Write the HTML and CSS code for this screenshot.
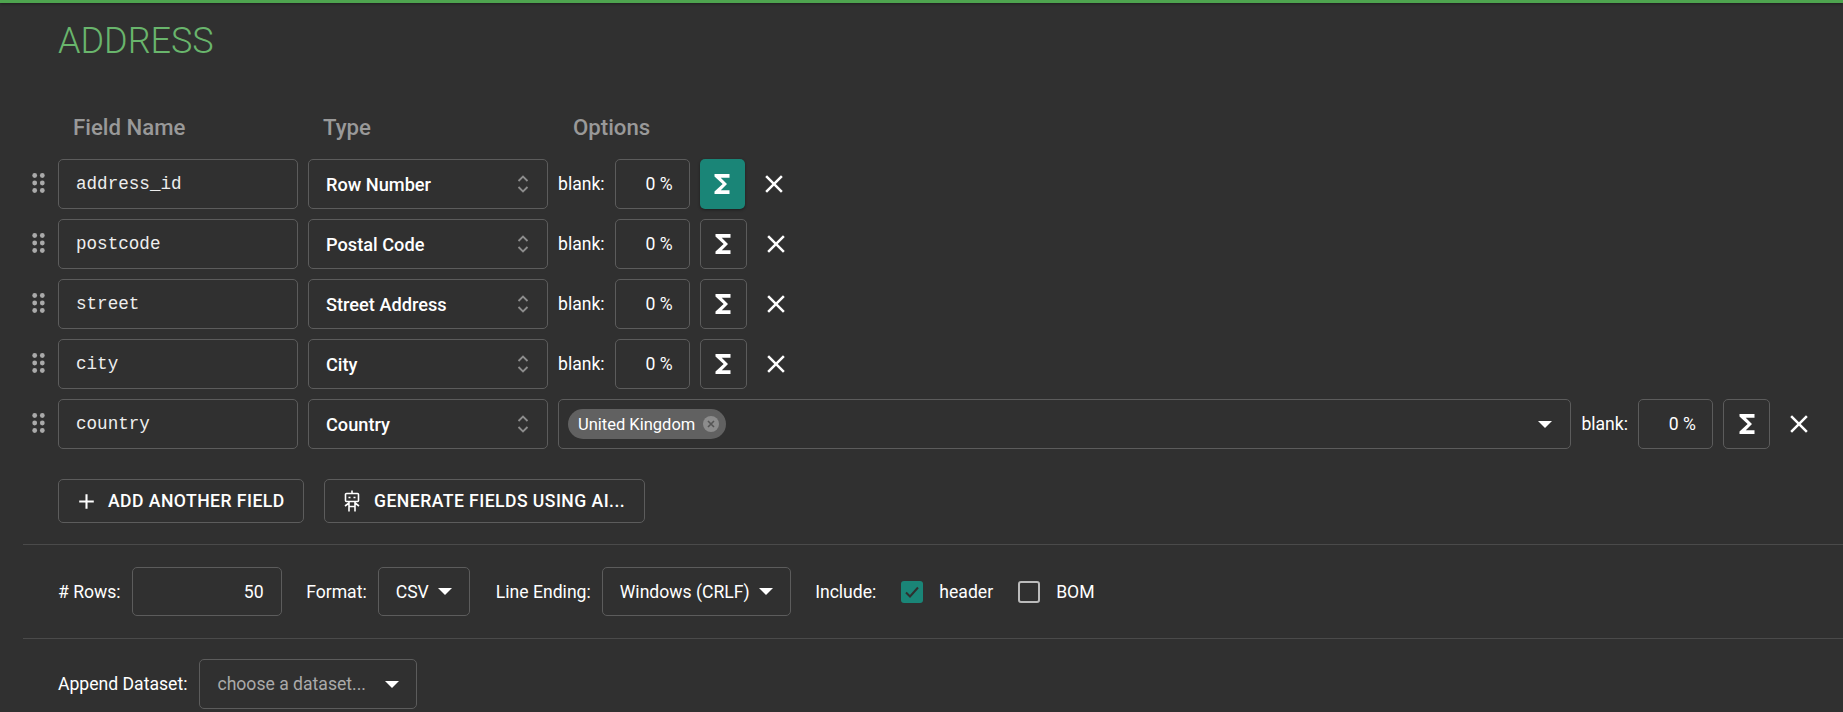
FILE: index.html
```html
<!DOCTYPE html>
<html lang="en">
<head>
  <meta charset="UTF-8">
  <title>Address schema</title>
  <link rel="stylesheet" href="styles.css">
</head>
<body>

<svg class="defs" width="0" height="0">
  <symbol id="sigma" viewBox="0 0 24 24"><path d="M18 4H6v2l6.5 6L6 18v2h12v-3h-7l5-5-5-5h7z"/></symbol>
  <symbol id="close" viewBox="0 0 24 24"><path d="M19 6.41 17.59 5 12 10.59 6.41 5 5 6.41 10.59 12 5 17.59 6.41 19 12 13.41 17.59 19 19 17.59 13.41 12z"/></symbol>
  <symbol id="updown" viewBox="0 0 12 24"><path d="M1.500 9L6 4.500 10.500 9M1.500 15L6 19.500 10.500 15" fill="none" stroke="currentColor" stroke-width="1.8"/></symbol>
  <symbol id="grip" viewBox="0 0 13 20">
    <circle cx="2.700" cy="2.500" r="2.400"/><circle cx="10.300" cy="2.500" r="2.400"/>
    <circle cx="2.700" cy="10" r="2.400"/><circle cx="10.300" cy="10" r="2.400"/>
    <circle cx="2.700" cy="17.500" r="2.400"/><circle cx="10.300" cy="17.500" r="2.400"/>
  </symbol>
</svg>

<div class="topbar"></div>

<h1 class="title">ADDRESS</h1>

<div class="col-heads">
  <div class="col-name">Field Name</div>
  <div class="col-type">Type</div>
  <div>Options</div>
</div>

<section class="fields">
  <div class="row">
    <svg class="grip"><use href="#grip"/></svg>
    <div class="box name">address_id</div>
    <div class="box type">Row Number <svg class="updown"><use href="#updown"/></svg></div>
    <span class="lbl">blank:</span>
    <div class="box pct">0 %</div>
    <button class="sigma on"><svg><use href="#sigma"/></svg></button>
    <button class="del"><svg><use href="#close"/></svg></button>
  </div>
  <div class="row">
    <svg class="grip"><use href="#grip"/></svg>
    <div class="box name">postcode</div>
    <div class="box type">Postal Code <svg class="updown"><use href="#updown"/></svg></div>
    <span class="lbl">blank:</span>
    <div class="box pct">0 %</div>
    <button class="sigma"><svg><use href="#sigma"/></svg></button>
    <button class="del"><svg><use href="#close"/></svg></button>
  </div>
  <div class="row">
    <svg class="grip"><use href="#grip"/></svg>
    <div class="box name">street</div>
    <div class="box type">Street Address <svg class="updown"><use href="#updown"/></svg></div>
    <span class="lbl">blank:</span>
    <div class="box pct">0 %</div>
    <button class="sigma"><svg><use href="#sigma"/></svg></button>
    <button class="del"><svg><use href="#close"/></svg></button>
  </div>
  <div class="row">
    <svg class="grip"><use href="#grip"/></svg>
    <div class="box name">city</div>
    <div class="box type">City <svg class="updown"><use href="#updown"/></svg></div>
    <span class="lbl">blank:</span>
    <div class="box pct">0 %</div>
    <button class="sigma"><svg><use href="#sigma"/></svg></button>
    <button class="del"><svg><use href="#close"/></svg></button>
  </div>
  <div class="row">
    <svg class="grip"><use href="#grip"/></svg>
    <div class="box name">country</div>
    <div class="box type">Country <svg class="updown"><use href="#updown"/></svg></div>
    <div class="box multi">
      <span class="chip">United Kingdom
        <svg class="chip-x" viewBox="0 0 16 16"><circle cx="8" cy="8" r="8"/><path d="M5 5l6 6M11 5l-6 6"/></svg>
      </span>
      <i class="caret"></i>
    </div>
    <span class="lbl">blank:</span>
    <div class="box pct">0 %</div>
    <button class="sigma"><svg><use href="#sigma"/></svg></button>
    <button class="del"><svg><use href="#close"/></svg></button>
  </div>
</section>

<div class="actions">
  <button class="action add">
    <svg viewBox="0 0 24 24"><path d="M19 13h-6v6h-2v-6H5v-2h6V5h2v6h6v2z"/></svg>
    ADD ANOTHER FIELD
  </button>
  <button class="action gen">
    <svg class="robot" viewBox="0 0 16 22">
      <path d="M8 .5v3M2.500 3.500h11a1 1 0 0 1 1 1v6a1 1 0 0 1-1 1h-11a1 1 0 0 1-1-1v-6a1 1 0 0 1 1-1zM5 11.500v5h6v-5M5 13L1 16M11 13l4 3M5 16.500v5M11 16.500v5"/>
      <path d="M4.500 7.500h2M9.500 7.500h2"/>
    </svg>
    GENERATE FIELDS USING AI...
  </button>
</div>

<hr class="rule first">

<div class="opts">
  <span class="lbl">#&nbsp;Rows:</span>
  <div class="box rows">50</div>
  <span class="lbl fmt">Format:</span>
  <div class="box sel">CSV <i class="caret"></i></div>
  <span class="lbl ending">Line Ending:</span>
  <div class="box sel">Windows (CRLF) <i class="caret"></i></div>
  <span class="lbl incl">Include:</span>
  <span class="check on"><svg viewBox="0 0 22 22"><path d="M5 11.500l4 4 8-9"/></svg></span>
  <span class="lbl">header</span>
  <span class="check bom"></span>
  <span class="lbl">BOM</span>
</div>

<hr class="rule">

<div class="opts append">
  <span class="lbl">Append Dataset:</span>
  <div class="box sel dataset">choose a dataset... <i class="caret"></i></div>
</div>

</body>
</html>
```

FILE: styles.css
```css
body {
  margin: 0;
  background: #303030;
  color: #fff;
  font-family: Roboto, sans-serif;
  font-size: 17.6px;
  overflow: hidden;
  height: 712px;
}
.defs {
  position: absolute;
}
.topbar {
  height: 3px;
  background: #4ea44f;
  box-shadow: 0 1px 3px rgba(0,0,0,0.4);
}
.title {
  margin: 14px 0 0 58px;
  font-size: 36px;
  line-height: 48px;
  font-weight: 300;
  color: #69b56c;
}

.col-heads {
  display: flex;
  margin: 48px 0 0 73px;
  height: 28px;
  line-height: 28px;
  font-size: 22.2px;
  font-weight: 500;
  color: #999;
}
.col-name { width: 250px; }
.col-type { width: 250px; }

.fields {
  display: flex;
  flex-direction: column;
  gap: 10px;
  margin: 18px 0 0 0;
}
.row {
  display: flex;
  align-items: center;
  height: 50px;
  padding: 0 29px 0 31.5px;
}
.grip {
  width: 13px;
  height: 20px;
  margin: 0 13.5px 3px 0;
  fill: #aaa;
}
.box {
  display: flex;
  align-items: center;
  box-sizing: border-box;
  height: 50px;
  border: 1px solid #5c5c5c;
  border-radius: 5px;
}
.name {
  width: 240px;
  padding-left: 17px;
  font-family: "Liberation Mono", monospace;
  font-size: 17.6px;
  color: #eee;
}
.type {
  width: 240px;
  margin: 0 10px;
  padding: 0 17px;
  font-size: 18.2px;
  font-weight: 500;
  justify-content: space-between;
}
.updown {
  width: 12px;
  height: 24px;
  color: #8c8c8c;
  margin-right: 1px;
}
.lbl {
  white-space: nowrap;
}
.pct {
  width: 75px;
  margin-left: 10px;
  padding-right: 16px;
  justify-content: flex-end;
}
button {
  padding: 0;
  border: none;
  background: none;
  color: #fff;
  font-family: inherit;
  cursor: pointer;
}
.sigma {
  display: flex;
  align-items: center;
  justify-content: center;
  box-sizing: border-box;
  width: 47px;
  height: 50px;
  margin-left: 10px;
  border: 1px solid #5c5c5c;
  border-radius: 5px;
}
.sigma svg {
  width: 30px;
  height: 30px;
  fill: #fff;
}
.sigma.on {
  width: 45px;
  border: none;
  background: #1a8577;
  box-shadow: 0 1px 3px rgba(0,0,0,0.4);
}
.del {
  display: flex;
  margin-left: 14px;
}
.del svg {
  width: 30px;
  height: 30px;
  fill: #fff;
}

.multi {
  flex: 1;
  margin-right: 10px;
  padding: 0 18px 0 9px;
  justify-content: space-between;
}
.chip {
  display: flex;
  align-items: center;
  height: 30px;
  padding: 0 7px 0 10px;
  border-radius: 15px;
  background: #616161;
  font-size: 16.5px;
}
.chip-x {
  width: 16px;
  height: 16px;
  margin-left: 8px;
}
.chip-x circle { fill: #8c8c8c; }
.chip-x path {
  fill: none;
  stroke: #555;
  stroke-width: 1.6;
}
.caret {
  display: inline-block;
  width: 0;
  height: 0;
  border-left: 7px solid transparent;
  border-right: 7px solid transparent;
  border-top: 7px solid #fff;
}

.actions {
  display: flex;
  gap: 20px;
  margin: 30px 0 0 58px;
}
.action {
  display: flex;
  align-items: center;
  box-sizing: border-box;
  height: 44px;
  border: 1px solid #5c5c5c;
  border-radius: 5px;
  font-size: 17.6px;
  font-weight: 500;
  letter-spacing: 0.45px;
  white-space: nowrap;
}
.add {
  width: 246px;
  padding-left: 15px;
  gap: 9px;
}
.add svg {
  width: 25px;
  height: 25px;
  fill: #fff;
}
.gen {
  width: 321px;
  padding-left: 19px;
  gap: 14px;
}
.robot {
  width: 16px;
  height: 22px;
  fill: none;
  stroke: #fff;
  stroke-width: 1.6;
}

.rule {
  margin: 22px 0 0 23px;
  height: 1px;
  border: none;
  background: #4a4a4a;
}
.rule.first { margin-top: 21px; }

.opts {
  display: flex;
  align-items: center;
  margin: 22px 0 0 58px;
  height: 49px;
}
.rows {
  width: 150px;
  height: 49px;
  margin-left: 11px;
  padding-right: 17px;
  justify-content: flex-end;
}
.sel {
  height: 49px;
  margin-left: 11px;
  padding: 0 17px;
  gap: 9px;
}
.fmt { margin-left: 24.5px; }
.ending { margin-left: 26px; }
.incl { margin-left: 24.5px; }
.check {
  display: flex;
  box-sizing: border-box;
  width: 22px;
  height: 22px;
  margin: 0 16px 0 25px;
  border-radius: 3px;
  border: 2px solid #bbb;
}
.check.on {
  border: none;
  background: #1a8577;
}
.check svg {
  fill: none;
  stroke: #303030;
  stroke-width: 2;
}

.append {
  margin-top: 20px;
  height: 50px;
}
.dataset {
  width: 218px;
  height: 50px;
  margin-left: 12px;
  color: #aaa;
  justify-content: space-between;
}
```
